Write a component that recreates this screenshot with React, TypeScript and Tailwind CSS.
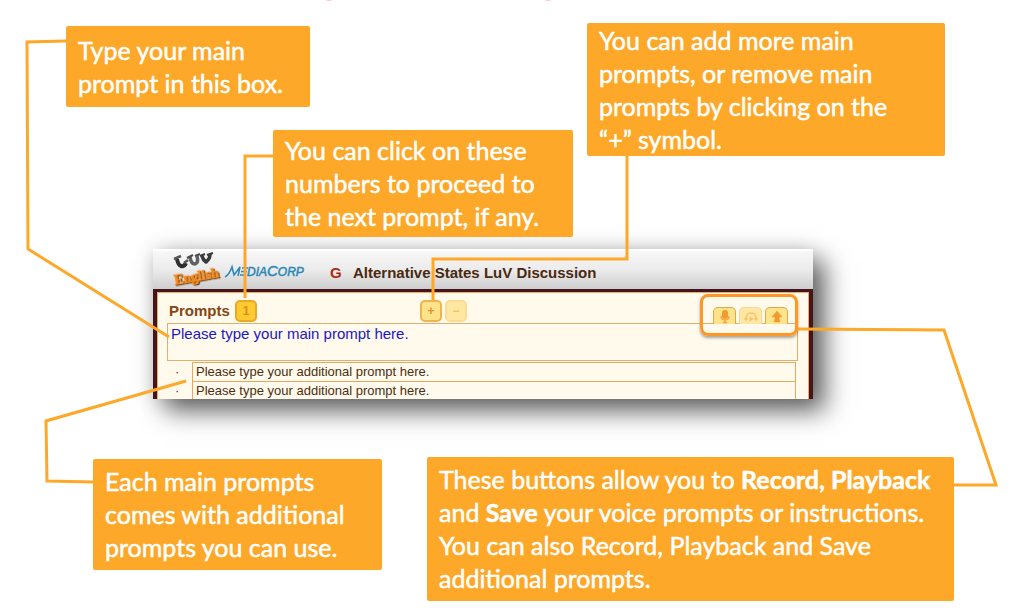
import React from "react";

const calloutBase =
  "absolute flex items-center rounded-[2px] bg-[#fda829] px-3 font-['Lato',sans-serif] text-[25px] leading-[33px] whitespace-nowrap text-white [-webkit-text-stroke:0.5px_white]";

function Callout({ place, children }: { place: string; children: React.ReactNode }) {
  return (
    <aside className={`${calloutBase} ${place}`}>
      <p>{children}</p>
    </aside>
  );
}

function BrandLogo() {
  return (
    <svg width="50" height="38" viewBox="0 0 50 38" role="img" aria-label="LuV English">
      <g fill="none" strokeLinejoin="round">
        <path d="M4 8 Q5 14 8 15 Q11 16 13 12" stroke="#2e2e2e" strokeWidth="4" />
        <path d="M1 8 L8 5 M11 12 L15 9" stroke="#555" strokeWidth="2.500" />
        <path d="M17 6 Q18 13 22 13 Q26 12 24 5" stroke="#606060" strokeWidth="3.500" />
        <path d="M14 7 L20 4 M22 5 L27 3" stroke="#4a4a4a" strokeWidth="2" />
        <path d="M29 5 Q30 9 33 11 Q37 8 37 3" stroke="#3a3a3a" strokeWidth="3.500" />
        <path d="M27 5 L32 3 M34 4 L40 2" stroke="#3a3a3a" strokeWidth="2" />
      </g>
      <text
        transform="translate(2 34) rotate(-10)"
        fontFamily="'Liberation Serif', serif"
        fontWeight="700"
        fontSize="14"
        fill="#f98e22"
        stroke="#f98e22"
        strokeWidth="0.700"
        style={{ filter: "drop-shadow(1px 1px 0 #5c3a1c)" }}
      >
        English
      </text>
    </svg>
  );
}

function MediaCorpLogo() {
  return (
    <svg width="86" height="20" viewBox="0 0 86 20" role="img" aria-label="MediaCorp">
      <g fill="none" stroke="#2a88b8">
        <path d="M0 15 Q4 13 7 5 L9 13 L15 5 L13 14" strokeWidth="1.600" />
        <path d="M17 6 H23 M16 9.500 H22 M15 13 H21" strokeWidth="1.300" />
      </g>
      <text
        x="22"
        y="14"
        fontFamily="'Liberation Sans', sans-serif"
        fontStyle="italic"
        fill="#2a88b8"
        stroke="#2a88b8"
        strokeWidth="0.500"
      >
        <tspan fontSize="12">DIA</tspan>
        <tspan fontSize="15">C</tspan>
        <tspan fontSize="12">ORP</tspan>
      </text>
    </svg>
  );
}

const tabClass = "flex h-[17px] w-[23px] items-end justify-center rounded-t-[5px] border border-b-0";

function AudioTools() {
  return (
    <div className="flex gap-[3px]">
      <button aria-label="Record" className={`${tabClass} border-[#e0a848] bg-[#fde38c]`}>
        <svg width="12" height="14" viewBox="0 0 12 14">
          <rect x="3" y="0" width="6" height="9" rx="3" fill="#f4982b" />
          <path d="M2 6 Q2 10 6 10 Q10 10 10 6 M6 10 V13 M4 12.500 H8" fill="none" stroke="#f4a23a" strokeWidth="1.300" />
        </svg>
      </button>
      <button aria-label="Playback" className={`${tabClass} border-[#f8d590] bg-[#fee7a3]`}>
        <svg width="14" height="14" viewBox="0 0 14 14">
          <path d="M2 9 Q2 3 7 3 Q12 3 12 9" fill="none" stroke="#f7c46c" strokeWidth="1.400" />
          <path d="M1 8 H3 V10 H1 Z M11 8 H13 V10 H11 Z M6 7 L9 9 L6 11 Z" fill="#f7c46c" stroke="#f7c46c" />
        </svg>
      </button>
      <button aria-label="Save" className={`${tabClass} border-[#e0a848] bg-[#fde38c]`}>
        <svg width="12" height="14" viewBox="0 0 12 14">
          <path d="M6 1 L11 7 H8 V9 L9 12 H3 L4 9 V7 H1 Z" fill="#f4982b" stroke="#f4982b" strokeWidth="0.500" />
        </svg>
      </button>
    </div>
  );
}

const squareButton =
  "flex size-[22px] items-center justify-center rounded-[5px] border-2 text-[12px] leading-none font-bold";

function PromptPanel() {
  return (
    <section className="h-[150px] w-full max-w-[660px] overflow-hidden bg-[#44151a] font-['Liberation_Sans',sans-serif] shadow-[12px_12px_24px_rgba(0,0,0,0.6),0_0_20px_rgba(0,0,0,0.15)]">
      <header className="flex h-10 items-center border-t-2 border-white bg-linear-to-b from-[#f8f8f8] via-[#ebebeb] to-[#cecece] pl-5">
        <div className="w-[52px]">
          <BrandLogo />
        </div>
        <div className="flex w-[105px] pt-1">
          <MediaCorpLogo />
        </div>
        <span className="w-[23px] pt-1.5 text-[15px] leading-4 font-bold text-[#a82c10]">G</span>
        <h1 className="pt-1.5 text-[15px] leading-4 font-bold text-[#49290f]">Alternative States LuV Discussion</h1>
      </header>
      <div className="mx-1 mt-[3px] h-[120px] border border-[#eda96c] bg-[#fffaec] pt-[7px] pr-[10px] pl-[9px]">
        <div className="flex h-[23px] items-start">
          <h2 className="w-[68px] pl-[2px] text-[15px] leading-[22px] font-bold text-[#824716]">Prompts</h2>
          <button className={`${squareButton} border-[#e9a72b] bg-[#fdca30] text-[#d98d20]`}>1</button>
          <div className="ml-[163px] flex flex-1 gap-[3px]">
            <button aria-label="Add prompt" className={`${squareButton} border-[#f0b44f] bg-[#fee38b] text-[#ee8d25]`}>
              +
            </button>
            <button aria-label="Remove prompt" className={`${squareButton} border-[#fbdc92] bg-[#fee7a0] text-[#f5c064]`}>
              −
            </button>
          </div>
          <div className="pt-[7px] pr-[10px]">
            <AudioTools />
          </div>
        </div>
        <textarea
          aria-label="Main prompt"
          defaultValue="Please type your main prompt here."
          className="block h-[38px] w-full resize-none border border-[#e0b070] bg-transparent px-[3px] py-px text-[15px] leading-[18px] text-[#1b16c4] outline-none"
        />
        <ul className="mt-px pr-[2px] text-[13px] text-[#4a2f14]">
          {["First additional prompt", "Second additional prompt"].map((label) => (
            <li key={label} className="flex h-[19px] items-center">
              <span className="w-[25px] pl-[8px]">·</span>
              <input
                aria-label={label}
                defaultValue="Please type your additional prompt here."
                className="h-[20px] min-w-0 flex-1 border border-[#e6a863] bg-transparent px-[3px] leading-4 outline-none"
              />
            </li>
          ))}
        </ul>
      </div>
    </section>
  );
}

export default function App() {
  return (
    <main className="relative min-h-screen overflow-hidden bg-white pt-[249px] pl-[153px]">
      <PromptPanel />

      <div className="absolute top-[294px] left-[700px] h-[42px] w-[98px] rounded-[8px] border-3 border-[#fd9827] shadow-[0_2px_3px_rgba(0,0,0,0.35)]" />

      <svg className="pointer-events-none absolute top-0 left-0" width="1018" height="615" viewBox="0 0 1018 615" aria-hidden="true">
        <g fill="none" stroke="#fda829" strokeWidth="3">
          <path d="M66 41 L27 42 L28 249 L169 337" />
          <path d="M273 156 H245 V298" />
          <path d="M627 155 V259 H433 V300" />
          <path d="M186 381 L46 421 L47 481 L93 482" />
          <path d="M798 329 L944 330 L996 485 H954" />
        </g>
        <g fill="#fbc9c4">
          <ellipse cx="329" cy="0" rx="3" ry="1" />
          <ellipse cx="548" cy="0" rx="3" ry="1" />
        </g>
      </svg>

      <Callout place="top-[26px] left-[66px] h-[81px] w-[244px]">
        Type your main
        <br />
        prompt in this box.
      </Callout>
      <Callout place="top-[130px] left-[273px] h-[107px] w-[300px]">
        You can click on these
        <br />
        numbers to proceed to
        <br />
        the next prompt, if any.
      </Callout>
      <Callout place="top-[23px] left-[587px] h-[133px] w-[358px]">
        You can add more main
        <br />
        prompts, or remove main
        <br />
        prompts by clicking on the
        <br />
        “+” symbol.
      </Callout>
      <Callout place="top-[459px] left-[93px] h-[111px] w-[289px]">
        Each main prompts
        <br />
        comes with additional
        <br />
        prompts you can use.
      </Callout>
      <Callout place="top-[457px] left-[427px] h-[144px] w-[527px]">
        These buttons allow you to <strong>Record, Playback</strong>
        <br />
        and <strong>Save</strong> your voice prompts or instructions.
        <br />
        You can also Record, Playback and Save
        <br />
        additional prompts.
      </Callout>
    </main>
  );
}
